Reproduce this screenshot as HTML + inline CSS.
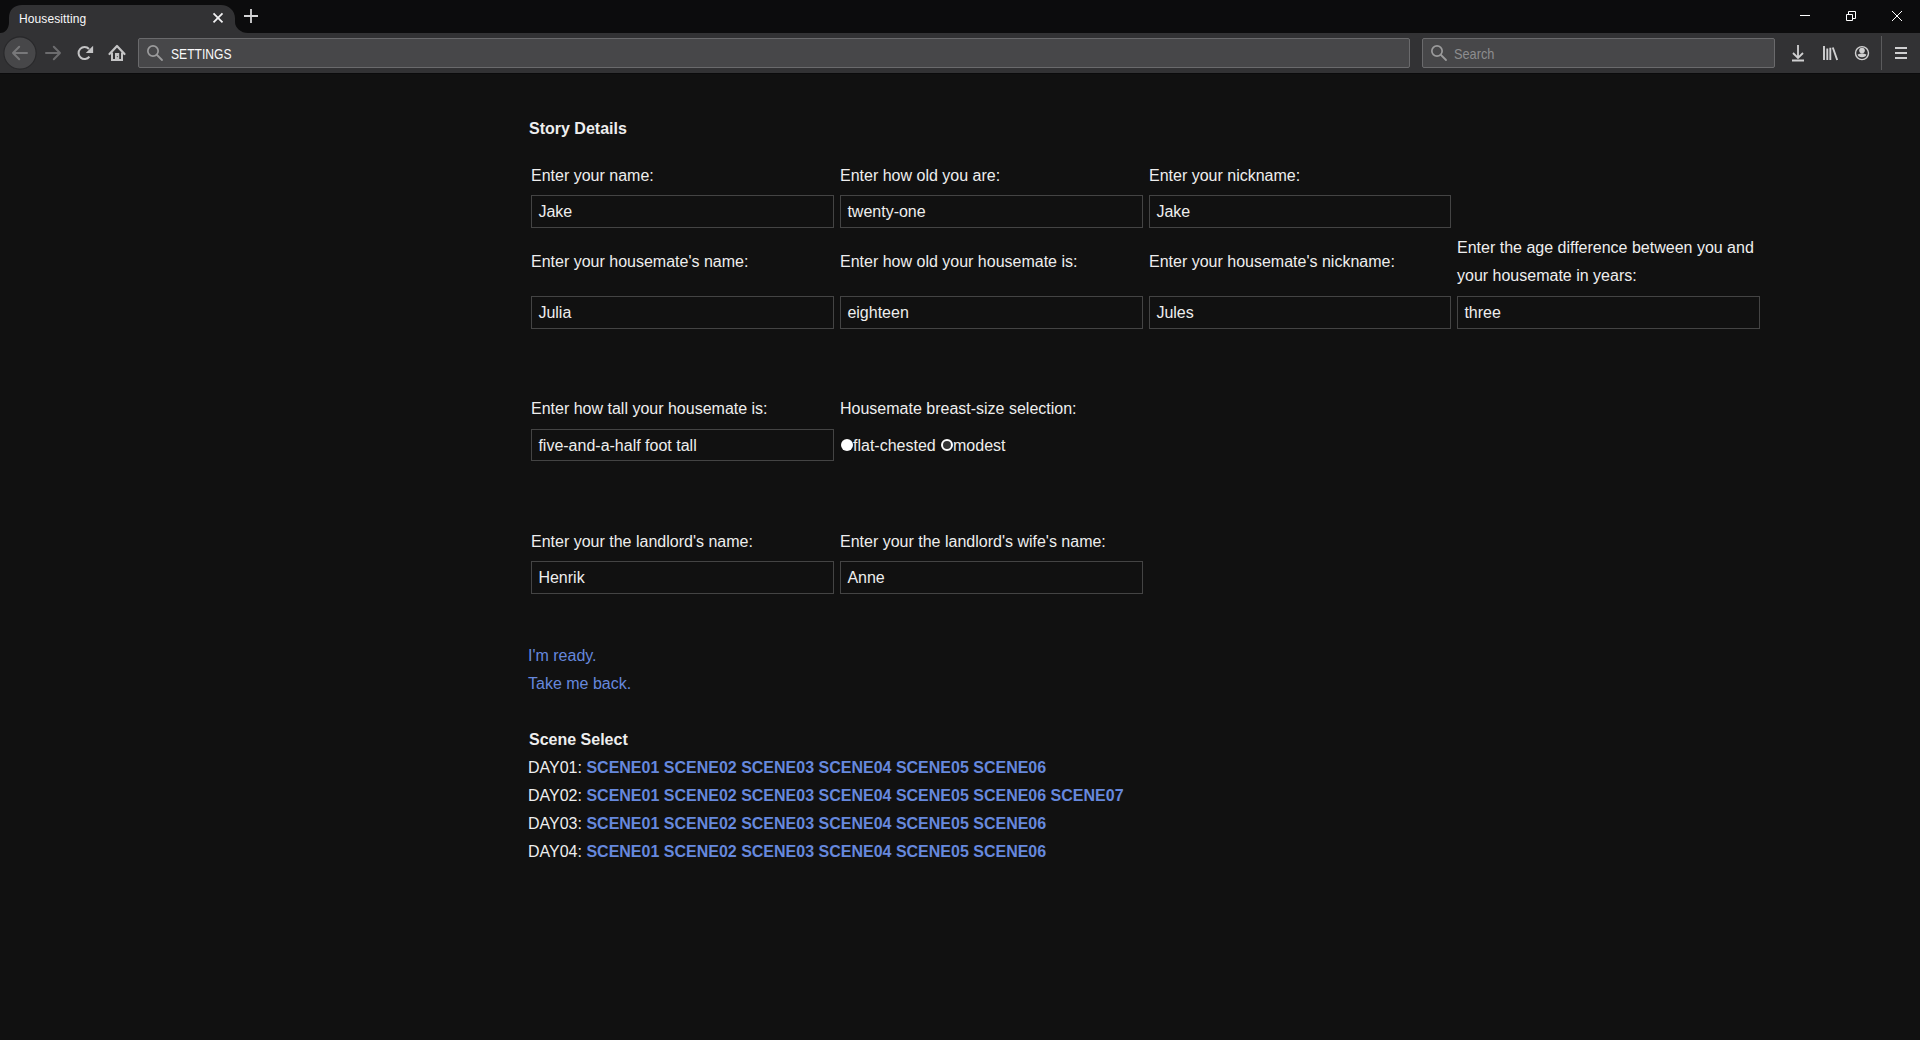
<!DOCTYPE html>
<html><head><meta charset="utf-8">
<style>
*{box-sizing:border-box;}
html,body{margin:0;padding:0;}
body{width:1920px;height:1040px;overflow:hidden;background:#111;position:relative;font-family:"Liberation Sans",sans-serif;}
.abs{position:absolute;}
#tabstrip{left:0;top:0;width:1920px;height:33px;background:#0c0c0d;}
#toolbar{left:0;top:33px;width:1920px;height:40px;background:#323234;}
#tbline{left:0;top:73px;width:1920px;height:1px;background:#0b0b0c;}
.field{position:absolute;height:30px;top:38px;background:#474749;border:1px solid #6a6a6c;border-radius:2px;}
.t{position:absolute;font-size:16px;line-height:28px;color:#eee;white-space:nowrap;}
.b{font-weight:bold;}
.inp{position:absolute;width:303px;height:33px;border:1px solid #444;color:#eee;font-size:16px;line-height:18px;padding:7px 0 0 6.4px;white-space:nowrap;}
.lnk{color:#68d;}
</style></head><body>
<div id="tabstrip" class="abs"></div>
<svg class="abs" style="left:0;top:0" width="260" height="33" viewBox="0 0 260 33">
  <path d="M0,33 C6,33 9,28 9,22 L9,18 C9,10 14,5 22,5 L221,5 C229,5 235,11 235,18 L235,22 C235,28 241,33 248,33 Z" fill="#323234"/>
  <path d="M213.5,13.4 L222.5,22.4 M222.5,13.4 L213.5,22.4" stroke="#f1f1f2" stroke-width="1.8" fill="none"/>
  <path d="M251,9 L251,23 M244,16 L258,16" stroke="#d4d4d5" stroke-width="1.8" fill="none"/>
</svg>
<div class="abs" style="left:19px;top:11px;font-size:12px;line-height:16px;color:#f9f9fa;letter-spacing:0.1px;">Housesitting</div>
<!-- window controls -->
<svg class="abs" style="left:1790px;top:0" width="130" height="33">
  <path d="M10,15.5 L20,15.5" stroke="#fff" stroke-width="1"/>
  <path d="M56.5,14.5 h6 v6 h-6 z M58.5,14.5 V11.5 H65.5 V18.5 H62.5" stroke="#fff" stroke-width="1" fill="none"/>
  <path d="M102,11 L112,21 M112,11 L102,21" stroke="#fff" stroke-width="1" fill="none"/>
</svg>
<div id="toolbar" class="abs"></div>
<div id="tbline" class="abs"></div>
<!-- nav buttons -->
<svg class="abs" style="left:0;top:33px" width="140" height="40">
  <circle cx="20" cy="20" r="16.1" fill="#474749" stroke="#28282a" stroke-width="1.1"/>
  <path d="M13,20 L27,20 M19.2,13.8 L13,20 L19.2,26.2" stroke="#78787a" stroke-width="2" fill="none" stroke-linecap="round" stroke-linejoin="round"/>
  <path d="M46,20 L60,20 M53.8,13.8 L60,20 L53.8,26.2" stroke="#6c6c6e" stroke-width="2" fill="none" stroke-linecap="round" stroke-linejoin="round"/>
  <path d="M89.4,23.6 A6,6 0 1 1 89,16" stroke="#c4c4c5" stroke-width="2" fill="none"/>
  <path d="M85.8,19.9 L93.1,19.9 L93.1,12.8 Z" fill="#c4c4c5"/>
  <path d="M109.5,21 L117,13 L124.5,21" stroke="#c4c4c5" stroke-width="2.2" fill="none" stroke-linecap="round" stroke-linejoin="round"/>
  <path d="M112,19.5 V27 H122 V19.5" stroke="#c4c4c5" stroke-width="2" fill="none"/>
  <rect x="115" y="20" width="4.2" height="7" fill="#c4c4c5"/>
  <circle cx="117.4" cy="23.6" r="0.7" fill="#5a5a5c"/>
</svg>
<!-- urlbar -->
<div class="field" style="left:138px;width:1272px;"></div>
<svg class="abs" style="left:145px;top:43px" width="20" height="20">
  <circle cx="8" cy="8" r="5.15" stroke="#9b9b9c" stroke-width="1.7" fill="none"/>
  <path d="M12,12 L17,17" stroke="#9b9b9c" stroke-width="1.8" stroke-linecap="round"/>
</svg>
<div class="abs" style="left:171px;top:46px;font-size:14.5px;line-height:17px;color:#f9f9fa;transform:scaleX(0.835);transform-origin:0 0;">SETTINGS</div>
<!-- searchbar -->
<div class="field" style="left:1422px;width:353px;"></div>
<svg class="abs" style="left:1429px;top:43px" width="20" height="20">
  <circle cx="8" cy="8" r="5.15" stroke="#9b9b9c" stroke-width="1.7" fill="none"/>
  <path d="M12,12 L17,17" stroke="#9b9b9c" stroke-width="1.8" stroke-linecap="round"/>
</svg>
<div class="abs" style="left:1454px;top:46px;font-size:14.5px;line-height:17px;color:#8d8d8f;transform:scaleX(0.88);transform-origin:0 0;">Search</div>
<!-- right icons -->
<svg class="abs" style="left:1780px;top:33px" width="140" height="40">
  <path d="M18,12 L18,25 M13,20 L18,25 L23,20" stroke="#d0d0d1" stroke-width="1.8" fill="none"/>
  <path d="M12,27.5 L24,27.5" stroke="#d0d0d1" stroke-width="2"/>
  <path d="M44,13 V27 M47.3,15.5 V27 M50.3,14.8 V27 M52.8,14.5 L57.2,27" stroke="#d0d0d1" stroke-width="1.9" fill="none"/>
  <circle cx="82" cy="20.1" r="6.5" stroke="#d0d0d1" stroke-width="1.4" fill="none"/>
  <circle cx="82" cy="17.6" r="2.8" fill="#d0d0d1"/>
  <path d="M77.6,21.6 Q82,19.6 86.4,21.6 Q85.8,24.3 82,24.3 Q78.2,24.3 77.6,21.6 Z" fill="#d0d0d1"/>
  <path d="M101.5,3 V37" stroke="#5b5b5d" stroke-width="1"/>
  <path d="M115,15 H127 M115,20 H127 M115,25 H127" stroke="#d0d0d1" stroke-width="2"/>
</svg>

<!-- page -->
<div class="t b" style="left:529px;top:115px;">Story Details</div>

<div class="t" style="left:531px;top:162px;">Enter your name:</div>
<div class="t" style="left:840px;top:162px;">Enter how old you are:</div>
<div class="t" style="left:1149px;top:162px;">Enter your nickname:</div>
<div class="inp" style="left:531px;top:195px;">Jake</div>
<div class="inp" style="left:840px;top:195px;">twenty-one</div>
<div class="inp" style="left:1149px;top:195px;width:302px;">Jake</div>

<div class="t" style="left:531px;top:248px;">Enter your housemate's name:</div>
<div class="t" style="left:840px;top:248px;">Enter how old your housemate is:</div>
<div class="t" style="left:1149px;top:248px;">Enter your housemate's nickname:</div>
<div class="t" style="left:1457px;top:234px;">Enter the age difference between you and</div>
<div class="t" style="left:1457px;top:262px;">your housemate in years:</div>
<div class="inp" style="left:531px;top:296px;">Julia</div>
<div class="inp" style="left:840px;top:296px;">eighteen</div>
<div class="inp" style="left:1149px;top:296px;width:302px;">Jules</div>
<div class="inp" style="left:1457px;top:296px;">three</div>

<div class="t" style="left:531px;top:395px;">Enter how tall your housemate is:</div>
<div class="t" style="left:840px;top:395px;">Housemate breast-size selection:</div>
<div class="inp" style="left:531px;top:429px;height:32px;">five-and-a-half foot tall</div>
<div class="abs" style="left:841px;top:439px;width:12px;height:12px;border-radius:50%;background:#fff;"></div>
<div class="t" style="left:853px;top:432px;">flat-chested</div>
<div class="abs" style="left:941px;top:439px;width:12px;height:12px;border-radius:50%;background:#363636;border:2px solid #fff;"></div>
<div class="t" style="left:953px;top:432px;">modest</div>

<div class="t" style="left:531px;top:528px;">Enter your the landlord's name:</div>
<div class="t" style="left:840px;top:528px;">Enter your the landlord's wife's name:</div>
<div class="inp" style="left:531px;top:561px;">Henrik</div>
<div class="inp" style="left:840px;top:561px;">Anne</div>

<div class="t lnk" style="left:528px;top:642px;">I'm ready.</div>
<div class="t lnk" style="left:528px;top:670px;">Take me back.</div>

<div class="t b" style="left:529px;top:726px;">Scene Select</div>
<div class="t" style="left:528px;top:754px;">DAY01: <span class="lnk b">SCENE01 SCENE02 SCENE03 SCENE04 SCENE05 SCENE06</span></div>
<div class="t" style="left:528px;top:782px;">DAY02: <span class="lnk b">SCENE01 SCENE02 SCENE03 SCENE04 SCENE05 SCENE06 SCENE07</span></div>
<div class="t" style="left:528px;top:810px;">DAY03: <span class="lnk b">SCENE01 SCENE02 SCENE03 SCENE04 SCENE05 SCENE06</span></div>
<div class="t" style="left:528px;top:838px;">DAY04: <span class="lnk b">SCENE01 SCENE02 SCENE03 SCENE04 SCENE05 SCENE06</span></div>
</body></html>
